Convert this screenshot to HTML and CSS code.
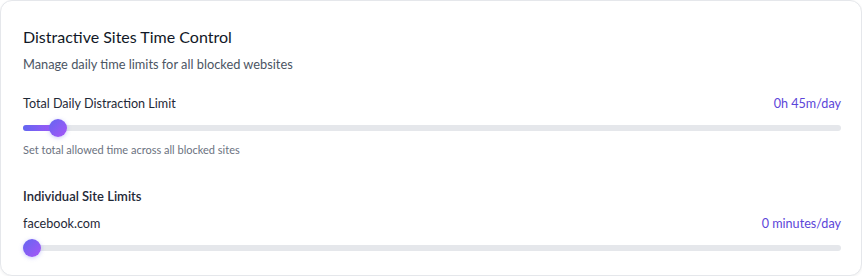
FILE: index.html
```html
<!DOCTYPE html>
<html lang="en">
<head>
  <meta charset="UTF-8">
  <meta name="viewport" content="width=device-width, initial-scale=1.0">
  <title>Time Control</title>
  <link rel="stylesheet" href="styles.css">
</head>
<body>

  <section class="card">
    <h2 class="title">Distractive Sites Time Control</h2>
    <p class="subtitle">Manage daily time limits for all blocked websites</p>

    <div class="row total-row">
      <span class="label">Total Daily Distraction Limit</span>
      <span class="value">0h 45m/day</span>
    </div>
    <div class="slider">
      <div class="fill" style="width: 35px"></div>
      <div class="thumb" style="left: 35px"></div>
    </div>
    <p class="hint">Set total allowed time across all blocked sites</p>

    <h3 class="section">Individual Site Limits</h3>
    <div class="row site-row">
      <span class="label">facebook.com</span>
      <span class="value">0 minutes/day</span>
    </div>
    <div class="slider">
      <div class="fill" style="width: 0"></div>
      <div class="thumb" style="left: 9px"></div>
    </div>
  </section>

</body>
</html>
```

FILE: styles.css
```css
body {
  margin: 0 1px 0 0;
  background-color: #fff;
  font-family: "Lato", "Open Sans", sans-serif;
  color: #1f2937;
}
.card {
  border: 1px solid #e5e7eb;
  border-radius: 12px;
  box-shadow: 0 1px 3px rgba(0, 0, 0, 0.06);
  padding: 24px 20px 24px 22px;
  background-color: #fff;
}
.title {
  margin: 0;
  font-size: 16px;
  line-height: 24px;
  font-weight: 400;
  color: #111827;
}
.subtitle {
  margin: 5px 0 0;
  font-size: 12.8px;
  line-height: 20px;
  color: #4b5563;
}
.row {
  display: flex;
  justify-content: space-between;
  align-items: center;
  font-size: 12.6px;
  line-height: 20px;
}
.total-row {
  margin-top: 20px;
}
.site-row {
  margin-top: 8px;
}
.label {
  color: #1f2937;
}
.value {
  color: #5b45d9;
}
.slider {
  position: relative;
  height: 6px;
  margin-top: 11px;
  border-radius: 3px;
  background-color: #e5e7eb;
}
.fill {
  height: 100%;
  border-radius: 3px;
  background: linear-gradient(90deg, #6366f1, #a855f7);
}
.thumb {
  position: absolute;
  top: 50%;
  width: 18px;
  height: 18px;
  margin-left: -9px;
  margin-top: -9px;
  border-radius: 50%;
  background: linear-gradient(135deg, #6366f1, #a855f7);
  box-shadow: 0 1px 4px rgba(99, 102, 241, 0.35);
}
.hint {
  margin: 11px 0 0;
  font-size: 11px;
  line-height: 16px;
  color: #6b7280;
}
.section {
  margin: 28px 0 0;
  font-size: 13px;
  line-height: 20px;
  font-weight: 600;
  color: #1f2937;
}
```
